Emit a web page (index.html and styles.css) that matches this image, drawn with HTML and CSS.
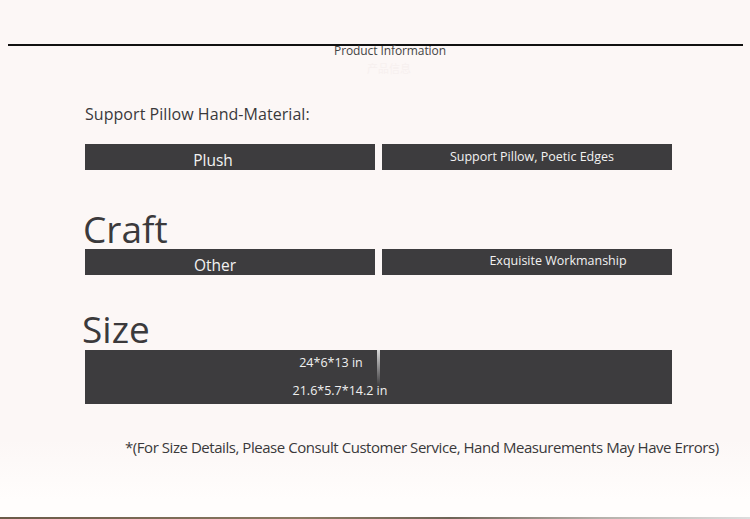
FILE: index.html
```html
<!DOCTYPE html>
<html>
<head>
<meta charset="utf-8">
<link rel="stylesheet" href="styles.css">
</head>
<body>
<div class="page">
  <header class="head">
    <div class="rule"></div>
    <div class="title">Product Information</div>
    <div class="subtitle">产品信息</div>
  </header>

  <section class="block">
    <div class="label">Support Pillow Hand-Material:</div>
    <div class="pair">
      <div class="cell cell-big cell-plush">Plush</div>
      <div class="cell cell-small">Support Pillow, Poetic Edges</div>
    </div>
  </section>

  <section class="block block-craft">
    <div class="heading">Craft</div>
    <div class="pair">
      <div class="cell cell-big cell-other">Other</div>
      <div class="cell cell-small cell-up">Exquisite Workmanship</div>
    </div>
  </section>

  <section class="block block-size">
    <div class="heading heading-size">Size</div>
    <div class="sizebar">
      <div class="seam"></div>
      <div class="sizes">
        <span>24*6*13 in</span>
        <span>21.6*5.7*14.2 in</span>
      </div>
    </div>
  </section>

  <p class="note">*(For Size Details, Please Consult Customer Service, Hand Measurements May Have Errors)</p>
  <div class="bottom-strip"></div>
</div>
</body>
</html>
```

FILE: styles.css
```css
html, body {
  margin: 0;
  padding: 0;
  background: #fdf8f7;
}
body {
  font-family: "Open Sans", "Noto Sans", sans-serif;
  color: #3b3a3c;
  width: 750px;
  height: 519px;
  overflow: hidden;
}
.page {
  position: relative;
  height: 519px;
  background: linear-gradient(#fcf7f6 0, #fcf7f6 440px, #fffdfc 500px, #fffdfc 100%);
}
.head {
  padding-top: 44px;
  display: flex;
  flex-direction: column;
  align-items: center;
}
.rule {
  align-self: stretch;
  margin: 0 7px 0 8px;
  height: 2px;
  background: #111;
}
.title {
  font-size: 12px;
  line-height: 12px;
  margin-top: -1px;
  margin-left: 30px;
  color: #444;
  letter-spacing: -0.1px;
}
.subtitle {
  font-size: 11px;
  line-height: 14px;
  margin-top: 4px;
  margin-left: 28px;
  color: #f7f0ef;
  font-family: "Noto Sans CJK SC", sans-serif;
}
.block {
  padding-left: 85px;
  width: 587px;
}
.label {
  margin-top: 28px;
  font-size: 16px;
  line-height: 22px;
  color: #3a393b;
  letter-spacing: 0.05px;
}
.pair {
  display: grid;
  grid-template-columns: 290px 290px;
  gap: 7px;
}
.block > .pair {
  margin-top: 19px;
}
.cell {
  height: 26px;
  background: #3d3c3e;
  color: #f2f2f2;
  display: flex;
  justify-content: center;
}
.cell-big {
  font-size: 15.5px;
  align-items: flex-end;
  line-height: 19px;
}
.cell-plush { padding-right: 34px; }
.cell-other { padding-right: 30px; }
.cell-small {
  font-size: 12.5px;
  line-height: 26px;
  align-items: center;
  padding-left: 10px;
}
.cell-up {
  line-height: 24px;
  align-items: flex-start;
  padding-left: 62px;
}
.block-craft {
  margin-top: 39px;
}
.heading {
  font-size: 37px;
  line-height: 40px;
  margin-left: -2px;
  color: #3b3a3c;
}
.block-craft .pair {
  margin-top: 0;
}
.block-size {
  margin-top: 34px;
}
.heading-size {
  margin-left: -3px;
  margin-bottom: 1px;
}
.sizebar {
  position: relative;
  height: 54px;
  background: #3d3c3e;
  display: flex;
}
.seam {
  position: absolute;
  left: 292px;
  top: 0;
  width: 3px;
  height: 36px;
  background: linear-gradient(#d8d8d8, #6a696b 70%, #3d3c3e);
}
.sizes {
  display: flex;
  flex-direction: column;
  align-items: center;
  width: 510px;
  padding-top: 2px;
  gap: 7px;
  font-size: 12.5px;
  line-height: 21px;
  color: #f0f0f0;
}
.sizes span:first-child { margin-right: 18px; }
.note {
  margin: 33px 0 0 125px;
  font-size: 15px;
  line-height: 20px;
  color: #3a393b;
  letter-spacing: -0.45px;
  white-space: nowrap;
}
.bottom-strip {
  position: absolute;
  left: 0;
  right: 0;
  bottom: 0;
  height: 2px;
  background: linear-gradient(90deg, #6b5a48, #8a7a62 40%, #6e6456 60%, #b5b0aa 80%, #ddd);
}
```
